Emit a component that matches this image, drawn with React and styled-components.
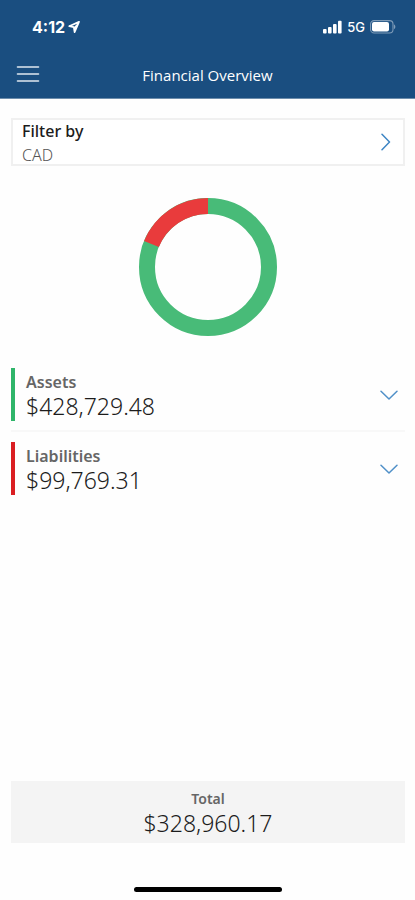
import React, { useState } from "react";
import styled, { createGlobalStyle } from "styled-components";

const GlobalStyle = createGlobalStyle`
  *, *::before, *::after { box-sizing: border-box; }
  body {
    margin: 0;
    background: #fefefe;
    color: #1c1c1c;
    font-family: "Noto Sans", "Open Sans", sans-serif;
  }
  button { font: inherit; color: inherit; cursor: pointer; }
`;

const Screen = styled.div`
  display: flex;
  flex-direction: column;
  min-height: 100vh;
`;

const Header = styled.header`
  background: #1a4e80;
  color: #fff;
  border-bottom: 1px solid #6d8dac;
`;

const StatusBar = styled.div`
  display: flex;
  align-items: center;
  justify-content: space-between;
  height: 54px;
  padding: 0 19px 0 32px;
  font-family: Inter, sans-serif;
`;

const StatusGroup = styled.div`
  display: flex;
  align-items: center;
  gap: ${(p) => p.$gap}px;
`;

const Clock = styled.span`
  font-size: 16px;
  line-height: 20px;
  font-weight: 700;
`;

const Network = styled.span`
  font-size: 13px;
  line-height: 16px;
  font-weight: 500;
`;

const NavBar = styled.nav`
  display: grid;
  grid-template-columns: 1fr auto 1fr;
  align-items: center;
  height: 44px;
  padding: 0 16px 2px;
`;

const MenuButton = styled.button`
  display: flex;
  justify-self: start;
  padding: 0;
  border: 0;
  background: none;
`;

const Title = styled.h1`
  margin: 0;
  font-family: "Open Sans", "Noto Sans", sans-serif;
  font-size: 15px;
  line-height: 20px;
  font-weight: 400;
`;

const Main = styled.main`
  display: flex;
  flex: 1;
  flex-direction: column;
  padding: 19px 10px 57px 11px;
`;

const FilterButton = styled.button`
  display: flex;
  align-items: center;
  justify-content: space-between;
  height: 48px;
  padding: 0 12px 0 9px;
  border: 2px solid #f0f0f0;
  background: #fff;
  text-align: left;
`;

const FilterText = styled.span`
  display: flex;
  flex-direction: column;
  padding-top: 2px;
  line-height: 24px;
`;

const FilterLabel = styled.span`
  font-size: 16px;
  font-weight: 500;
`;

const FilterValue = styled.span`
  font-size: 16px;
  font-weight: 300;
  color: #555;
`;

const ChartArea = styled.div`
  display: flex;
  justify-content: center;
  padding: 31px 0;
`;

const Accounts = styled.ul`
  display: flex;
  flex-direction: column;
  margin: 0;
  padding: 0;
  list-style: none;
`;

const AccountItem = styled.li`
  & + & {
    margin-top: 9px;
    padding-top: 10px;
    border-top: 2px solid #f8f8f8;
  }
`;

const AccountButton = styled.button`
  display: flex;
  align-items: center;
  justify-content: space-between;
  width: 100%;
  height: 53px;
  padding: 0 7px 0 11px;
  border: 0;
  border-left: 4px solid ${(p) => p.$accent};
  background: none;
  text-align: left;
`;

const Figures = styled.span`
  display: flex;
  flex-direction: column;
  padding-top: 2px;
`;

const Label = styled.span`
  font-size: ${(p) => (p.$small ? 14 : 16)}px;
  line-height: 20px;
  font-weight: 600;
  color: #666;
`;

const Amount = styled.span`
  font-size: 23px;
  line-height: 28px;
  font-weight: 350;
`;

const Total = styled.section`
  display: flex;
  flex-direction: column;
  align-items: center;
  margin-top: auto;
  padding: 8px 0 6px;
  background: #f4f4f4;
`;

const HomeIndicator = styled.div`
  position: fixed;
  bottom: 8px;
  left: 50%;
  width: 148px;
  height: 5px;
  margin-left: -74px;
  border-radius: 3px;
  background: #000;
`;

function LocationIcon() {
  return (
    <svg width="12" height="12" viewBox="0 0 12 12" aria-hidden="true">
      <path d="M11 .9 1.2 5.2l4.6 1 .8 5Z" fill="none" stroke="#fff" strokeWidth="1.7" strokeLinejoin="round" />
      <path d="M11 .9 5.8 6.2l.8 5Z" fill="#fff" />
    </svg>
  );
}

function SignalIcon() {
  return (
    <svg width="19" height="14" viewBox="0 0 19 14" fill="#fff" aria-hidden="true">
      <rect x="0" y="9" width="3.6" height="4.5" rx="1" />
      <rect x="5" y="7" width="3.6" height="6.5" rx="1" />
      <rect x="10" y="4" width="3.6" height="9.5" rx="1" />
      <rect x="15" y="0.8" width="3.6" height="12.7" rx="1" />
    </svg>
  );
}

function BatteryIcon() {
  return (
    <svg width="26" height="14" viewBox="0 0 26 14" aria-hidden="true">
      <rect x="0.6" y="0.6" width="22.4" height="12.4" rx="3.5" fill="none" stroke="#7f9cb8" strokeWidth="1.1" />
      <rect x="2" y="2" width="17" height="9.6" rx="2" fill="#fff" />
      <path d="M24 4.5c1.8.6 1.8 4 0 4.6Z" fill="#7f9cb8" />
    </svg>
  );
}

function MenuIcon() {
  return (
    <svg width="24" height="18" viewBox="0 0 24 18" aria-hidden="true">
      <path d="M1.5 1h21M1.5 8h21M1.5 15h21" stroke="#dfe8f0" strokeWidth="1.6" strokeLinecap="round" />
    </svg>
  );
}

function ChevronRight() {
  return (
    <svg width="10" height="18" viewBox="0 0 10 18" aria-hidden="true">
      <path d="m1 1.3 7.5 7.7L1 16.7" fill="none" stroke="#3d85c4" strokeWidth="1.5" strokeLinecap="round" strokeLinejoin="round" />
    </svg>
  );
}

function ChevronDown() {
  return (
    <svg width="18" height="10" viewBox="0 0 18 10" aria-hidden="true">
      <path d="M1 1.2 9 9l8-7.8" fill="none" stroke="#5090c8" strokeWidth="1.5" strokeLinecap="round" strokeLinejoin="round" />
    </svg>
  );
}

const accounts = [
  { name: "Assets", value: 428729.48, accent: "#2fb56a" },
  { name: "Liabilities", value: 99769.31, accent: "#da1e22" },
];

const money = (value) =>
  "$" + value.toLocaleString("en-US", { minimumFractionDigits: 2, maximumFractionDigits: 2 });

function Donut({ assets, liabilities }) {
  const share = (liabilities / (assets + liabilities)) * 100;
  return (
    <svg width="140" height="140" viewBox="0 0 140 140" role="img" aria-label="Assets and liabilities">
      <g fill="none" strokeWidth="16" transform="rotate(-90 70 70)">
        <circle cx="70" cy="70" r="61" stroke="#48bb78" />
        <circle
          cx="70"
          cy="70"
          r="61"
          stroke="#e93b3c"
          pathLength="100"
          strokeDasharray={`${share} ${100 - share}`}
          strokeDashoffset={share}
        />
      </g>
    </svg>
  );
}

export default function App() {
  const [open, setOpen] = useState(null);
  const [assets, liabilities] = accounts;

  return (
    <Screen>
      <GlobalStyle />
      <Header>
        <StatusBar>
          <StatusGroup $gap={3}>
            <Clock>4:12</Clock>
            <LocationIcon />
          </StatusGroup>
          <StatusGroup $gap={5}>
            <SignalIcon />
            <Network>5G</Network>
            <BatteryIcon />
          </StatusGroup>
        </StatusBar>
        <NavBar>
          <MenuButton type="button" aria-label="Menu">
            <MenuIcon />
          </MenuButton>
          <Title>Financial Overview</Title>
        </NavBar>
      </Header>
      <Main>
        <FilterButton type="button">
          <FilterText>
            <FilterLabel>Filter by</FilterLabel>
            <FilterValue>CAD</FilterValue>
          </FilterText>
          <ChevronRight />
        </FilterButton>
        <ChartArea>
          <Donut assets={assets.value} liabilities={liabilities.value} />
        </ChartArea>
        <Accounts>
          {accounts.map((account) => (
            <AccountItem key={account.name}>
              <AccountButton
                type="button"
                $accent={account.accent}
                aria-expanded={open === account.name}
                onClick={() => setOpen(open === account.name ? null : account.name)}
              >
                <Figures>
                  <Label>{account.name}</Label>
                  <Amount>{money(account.value)}</Amount>
                </Figures>
                <ChevronDown />
              </AccountButton>
            </AccountItem>
          ))}
        </Accounts>
        <Total>
          <Label $small>Total</Label>
          <Amount>{money(assets.value - liabilities.value)}</Amount>
        </Total>
      </Main>
      <HomeIndicator />
    </Screen>
  );
}
